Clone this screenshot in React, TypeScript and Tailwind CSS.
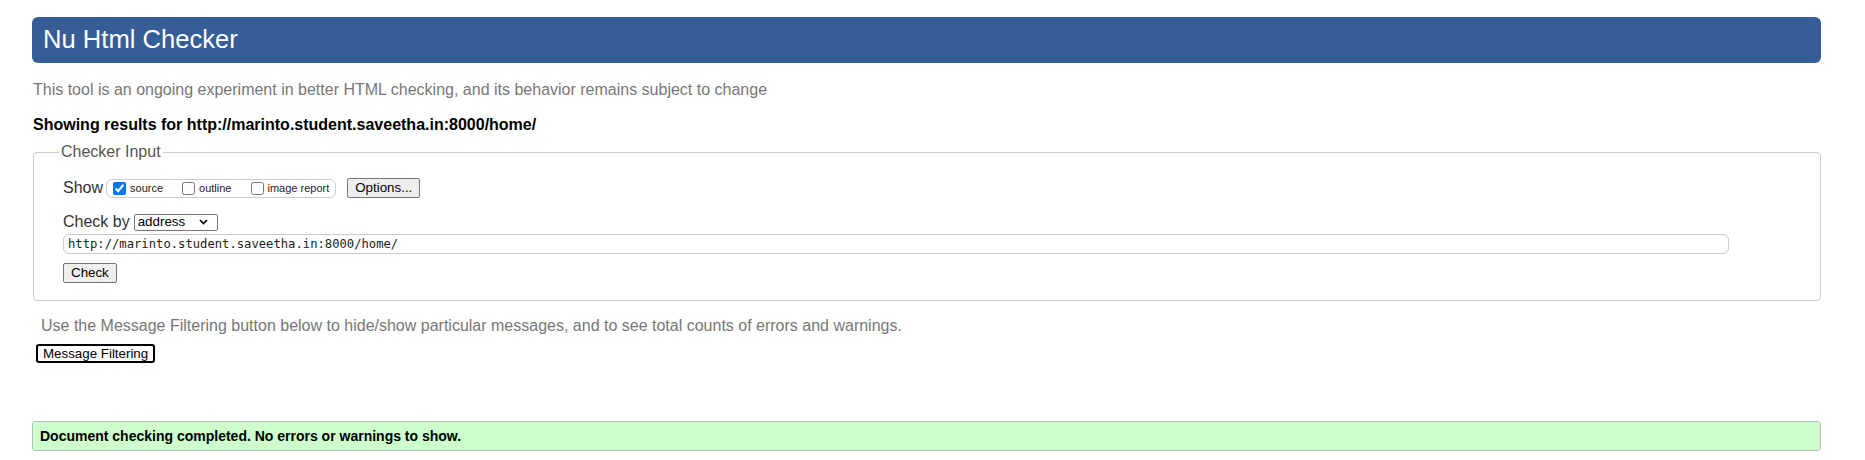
import React from "react";

export default function App() {
  return (
    <div className="w-full h-[460px] overflow-hidden bg-white pl-[32px] pr-[44px] pt-[17px] font-['Liberation_Sans',Arial,sans-serif]">
      <h1 className="h-[46px] rounded-[6px] bg-[#365d95] text-white text-[25.6px] leading-none font-normal pl-[11px] flex items-center">
        Nu Html Checker
      </h1>
      <p className="mt-[17px] pl-[1px] text-[16px] leading-[20px] text-[#777]">
        This tool is an ongoing experiment in better HTML checking, and its behavior remains subject to change
      </p>
      <p className="mt-[16px] pl-[1px] text-[16px] leading-[18px] font-bold text-black">
        Showing results for http://marinto.student.saveetha.in:8000/home/
      </p>
      <fieldset className="mt-[9px] ml-[1px] border border-[#ccc] rounded-[4px] pl-[29px] pt-[17px] pb-[17px]">
        <legend className="-ml-[4px] px-[2px] text-[16px] leading-[18px] text-[#555]">Checker Input</legend>
        <div className="flex items-center h-[20px] text-[16px] text-[#333]">
          <span>Show</span>
          <div className="ml-[3px] h-[19px] flex items-center border border-[#ccc] rounded-[6px] pl-[6px] pr-[6px] text-[11px] text-[#222]">
            <label className="flex items-center">
              <input type="checkbox" defaultChecked className="m-0 w-[13px] h-[13px]" />
              <span className="ml-[4px]">source</span>
            </label>
            <label className="flex items-center ml-[19px]">
              <input type="checkbox" className="m-0 w-[13px] h-[13px]" />
              <span className="ml-[4px]">outline</span>
            </label>
            <label className="flex items-center ml-[20px]">
              <input type="checkbox" className="m-0 w-[13px] h-[13px]" />
              <span className="ml-[3px]">image report</span>
            </label>
          </div>
          <button className="ml-[11px] h-[20px] px-[7px] border border-[#767676] rounded-[2px] bg-[#efefef] text-[13.33px] leading-none text-black">
            Options...
          </button>
        </div>
        <div className="mt-[14px] flex items-center h-[20px] text-[16px] text-[#333]">
          <span>Check by</span>
          <div className="ml-[4px] h-[17px] w-[84px] flex items-center border border-[#767676] rounded-[2px] pl-[3px] pr-[9px] text-[13.33px] text-black bg-white">
            <span>address</span>
            <svg className="ml-auto" width="9" height="6" viewBox="0 0 9 6" fill="none">
              <path d="M1 1l3.5 3.5L8 1" stroke="#000" strokeWidth="1.7" />
            </svg>
          </div>
        </div>
        <input
          readOnly
          value="http://marinto.student.saveetha.in:8000/home/"
          className="block mt-[2px] h-[20px] w-[1666px] border border-[#ccc] rounded-[6px] pl-[4px] font-['DejaVu_Sans_Mono',monospace] text-[12.2px] text-[#222] outline-none"
        />
        <button className="block w-fit mt-[9px] h-[20px] px-[7px] border border-[#767676] rounded-[2px] bg-[#efefef] text-[13.33px] leading-none text-black">
          Check
        </button>
      </fieldset>
      <p className="mt-[15px] pl-[9px] text-[16px] leading-[20px] text-[#777]">
        Use the Message Filtering button below to hide/show particular messages, and to see total counts of errors and warnings.
      </p>
      <button className="block w-fit mt-[8px] ml-[4px] h-[19px] px-[5px] border-2 border-black rounded-[3px] bg-white text-[13.33px] leading-none text-black">
        Message Filtering
      </button>
      <div className="mt-[58px] h-[30px] flex items-center border border-[#bbb] rounded-[3px] bg-[#ccffcc] pl-[7px] text-[14px] font-bold text-black">
        Document checking completed. No errors or warnings to show.
      </div>
    </div>
  );
}
